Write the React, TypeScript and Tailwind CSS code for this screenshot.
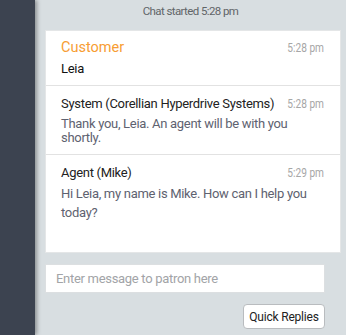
const font = { fontFamily: "Roboto, 'Liberation Sans', sans-serif" };

type Msg = {
  from: string;
  time: string;
  text: string;
  kind: "customer" | "system" | "agent";
};

const MESSAGES: Msg[] = [
  { from: "Customer", time: "5:28 pm", text: "Leia", kind: "customer" },
  {
    from: "System (Corellian Hyperdrive Systems)",
    time: "5:28 pm",
    text: "Thank you, Leia. An agent will be with you shortly.",
    kind: "system",
  },
  {
    from: "Agent (Mike)",
    time: "5:29 pm",
    text: "Hi Leia, my name is Mike. How can I help you today?",
    kind: "agent",
  },
];

function Time({ value }: { value: string }) {
  return (
    <span className="inline-block origin-right scale-x-[0.78] text-[13px] text-[#a7a7a7] whitespace-nowrap">
      {value}
    </span>
  );
}

function Message({ msg }: { msg: Msg }) {
  if (msg.kind === "customer") {
    return (
      <div className="pl-[15px] pr-[16px] pt-[7px] pb-[6px] border-b border-[#e2e2e2]">
        <div className="flex items-baseline justify-between">
          <span className="text-[14.5px] leading-[20px] text-[#f79d33]">
            {msg.from}
          </span>
          <Time value={msg.time} />
        </div>
        <p className="mt-[1px] text-[13px] leading-[20px] tracking-[-0.3px] text-[#111]">
          {msg.text}
        </p>
      </div>
    );
  }

  const system = msg.kind === "system";
  return (
    <div
      className={
        system
          ? "pl-[15px] pr-[16px] pt-[8px] pb-[9px] border-b border-[#e2e2e2]"
          : "pl-[15px] pr-[16px] pt-[8px]"
      }
    >
      <div className="flex items-baseline justify-between">
        <span className="text-[13px] leading-[18px] tracking-[-0.3px] text-[#222]">
          {msg.from}
        </span>
        <Time value={msg.time} />
      </div>
      <p
        className={
          system
            ? "mt-[3px] text-[13px] leading-[14px] tracking-[-0.3px] text-[#5e6270]"
            : "mt-[2px] text-[13px] leading-[19px] tracking-[-0.3px] text-[#5e6270]"
        }
      >
        {msg.text}
      </p>
    </div>
  );
}

export default function App() {
  return (
    <div style={font} className="flex h-[335px] w-[346px] overflow-hidden bg-[#d8dee1]">
      {/* left nav */}
      <div className="relative z-10 w-[35px] shrink-0 bg-[#3c4350] shadow-[2px_0_4px_rgba(0,0,0,0.35)]" />

      <div className="flex flex-1 flex-col pl-[10px]">
        <div className="pt-[3px] pr-[10px] text-center text-[11.5px] leading-[16px] tracking-[-0.6px] text-[#616568]">
          Chat started 5:28 pm
        </div>

        <div className="mt-[11px] h-[223px] w-[296px] border border-[#e4e6e7] bg-white">
          {MESSAGES.map((m) => (
            <Message key={m.from} msg={m} />
          ))}
        </div>

        <div className="mt-[11px] w-[280px]">
          <input
            type="text"
            placeholder="Enter message to patron here"
            className="h-[29px] w-full border border-[#dcdfe1] bg-white px-[10px] text-[13px] tracking-[-0.3px] text-[#333] placeholder:text-[#a2a4a7] focus:outline-none"
          />
          <div className="mt-[11px] flex justify-end">
            <button className="h-[25px] w-[82px] rounded-[4px] border border-[#b9bcbf] bg-white text-[12px] tracking-[-0.2px] text-[#222]">
              Quick Replies
            </button>
          </div>
        </div>
      </div>
    </div>
  );
}
